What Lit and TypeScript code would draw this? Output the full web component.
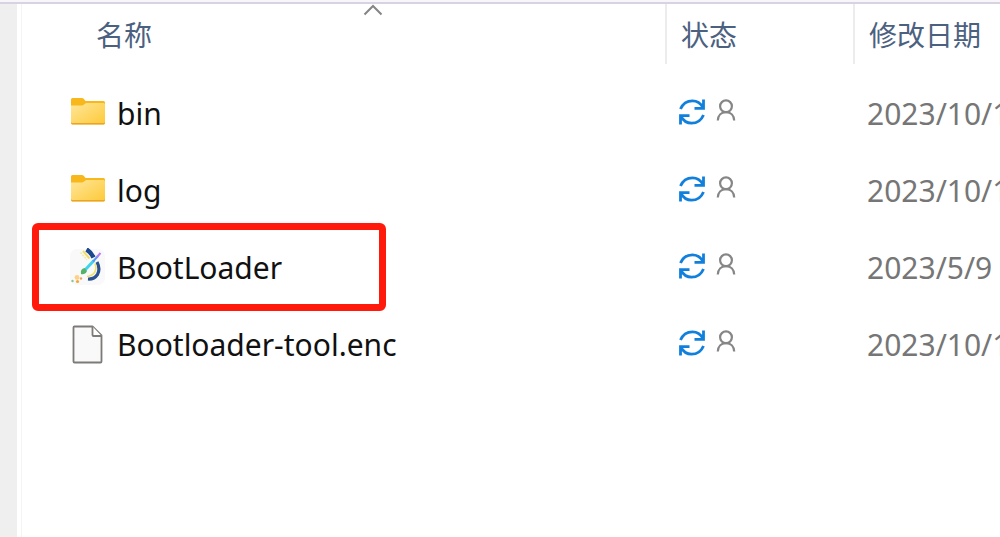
import { LitElement, html, css, svg, nothing } from "lit";
import { customElement, property } from "lit/decorators.js";

type Kind = "folder" | "app" | "file";

interface Entry {
  name: string;
  kind: Kind;
  modified: string;
  marked?: boolean;
}

const entries: Entry[] = [
  { name: "bin", kind: "folder", modified: "2023/10/1" },
  { name: "log", kind: "folder", modified: "2023/10/1" },
  { name: "BootLoader", kind: "app", modified: "2023/5/9", marked: true },
  { name: "Bootloader-tool.enc", kind: "file", modified: "2023/10/1" },
];

const folderShape = svg`
  <defs>
    <linearGradient id="front" x1="0" y1="0" x2="1" y2="1">
      <stop offset="0" stop-color="#ffe69a" />
      <stop offset="1" stop-color="#fdc937" />
    </linearGradient>
  </defs>
  <path d="M2 5.500q0-1.500 1.500-1.500h9.500q1 0 1.700.7l1.800 2.300h18q1.500 0 1.500 1.500v6H2z" fill="#f8b81c" />
  <path d="M2 11.500h11q1 0 1.800-.7l1.500-1.300q.6-.5 1.500-.5h16.700q1.500 0 1.500 1.500v18.500q0 1.500-1.500 1.500h-31q-1.500 0-1.500-1.500z" fill="url(#front)" />
  <path d="M2 28.500q0 2 1.500 2h31q1.500 0 1.500-2v-.5q0 1-1.500 1h-31q-1.500 0-1.500-1z" fill="#e9a52a" />`;

const appShape = svg`
  <rect x="1" y="1" width="35" height="36" rx="7" fill="#f9f9fa" />
  <path d="M17.500 1.500Q22 4 24.500 9.500" fill="none" stroke="#1b4690" stroke-width="4.500" />
  <path d="M14 3L20.500 10.500" stroke="#f5dc62" stroke-width="2" />
  <path d="M11.500 4.500L18 12" stroke="#f3e9a8" stroke-width="1.500" stroke-dasharray="2 1" />
  <path d="M28 14q3.500 7 .5 12.500q-3.500 5-9.500 4.500" fill="none" stroke="#2a5193" stroke-width="3.200" />
  <path d="M26 15.500q2 5-.5 9q-2.500 3.500-7.500 4" fill="none" stroke="#efe06a" stroke-width="1.600" />
  <path d="M15.500 22.500L25 12.500" stroke="#3fd3ee" stroke-width="3" />
  <path d="M24 13.500L29 8" stroke="#5b97f5" stroke-width="2" />
  <path d="M28 9L31.500 5" stroke="#b878f4" stroke-width="2" />
  <path d="M12 26q-1-5 3.500-6l2.500 3q-2 4-6 3z" fill="#55b267" />
  <circle cx="8" cy="29.500" r="2.400" fill="#ffd186" />
  <circle cx="8.500" cy="33.500" r="1.600" fill="#f5a63d" />
  <circle cx="12" cy="30.500" r="1.200" fill="#f0a05a" />
  <circle cx="3.500" cy="33" r="1.200" fill="#8cc68d" />`;

const fileShape = svg`
  <path d="M5.500 1.500h18l9 9v26q0 1-1 1h-26q-1 0-1-1v-34q0-1 1-1z" fill="#f9f9f9" stroke="#7d7b78" stroke-width="1.800" stroke-linejoin="round" />
  <path d="M23.500 1.500v8.500q0 1 1 1h8" fill="#fff" stroke="#7d7b78" stroke-width="1.800" stroke-linejoin="round" />`;

const shapes = { folder: folderShape, app: appShape, file: fileShape };

@customElement("entry-icon")
export class EntryIcon extends LitElement {
  static styles = css`
    :host { display: block; flex: none; }
    .icon { display: block; width: 38px; height: 39px; }
  `;

  @property() kind: Kind = "file";

  render() {
    return html`<svg class="icon" viewBox="0 0 38 39" aria-hidden="true">${shapes[this.kind]}</svg>`;
  }
}

@customElement("sync-status")
export class SyncStatus extends LitElement {
  static styles = css`
    :host { display: flex; align-items: flex-start; gap: 10px; padding-bottom: 4px; }
    .sync { width: 28px; height: 28px; }
    .person { width: 20px; height: 24px; }
    .stroke { fill: none; stroke-width: 2.800; }
    .blue { stroke: #117fdc; }
    .grey { stroke: #868686; stroke-width: 2.200; }
  `;

  render() {
    return html`
      <svg class="sync" viewBox="0 0 28 28" role="img" aria-label="正在同步">
        <path class="stroke blue" d="M2.500 11C5 5 10 2.800 14.500 2.800C19 2.800 22.500 5 25 9.500M25.500 1.500V10.300H16.500" />
        <path class="stroke blue" d="M25.500 17C23 23 18 25.200 13.500 25.200C9 25.200 5.500 23 3 18.500M2.500 26.500V17.700H11.500" />
      </svg>
      <svg class="person" viewBox="0 0 20 24" role="img" aria-label="共享">
        <circle class="stroke grey" cx="10" cy="8.300" r="5.900" />
        <path class="stroke grey" d="M1.800 22.500C2 17.500 5 14.200 10 14.200S18 17.500 18.200 22.500" />
      </svg>`;
  }
}

@customElement("app-root")
export class AppRoot extends LitElement {
  static styles = css`
    :host {
      display: flex;
      box-sizing: border-box;
      min-height: 100vh;
      overflow: hidden;
      background: #fff;
      color: #111;
      font-family: "Noto Sans", "Noto Sans CJK SC", sans-serif;
      font-size: 30px;
      line-height: 40px;
      border-top: 2px solid #f8f6fa;
    }
    .rail {
      flex: none;
      width: 17px;
      background: #efefef;
      border-top: 2px solid #d9d2e0;
    }
    .pane {
      flex: 1;
      min-width: 0;
      padding-left: 4px;
      border-top: 2px solid #d9d2e0;
    }
    .list {
      min-height: 100%;
      border-left: 1px solid #f4f4f4;
    }
    .files {
      width: 100%;
      table-layout: fixed;
      border-collapse: separate;
      border-spacing: 0;
    }
    .status-col { width: 188px; }
    .date-col { width: 147px; }
    .head {
      position: relative;
      height: 60px;
      padding: 2px 0 0 14px;
      box-sizing: border-box;
      text-align: left;
      font-size: 28px;
      font-weight: 400;
      color: #4b617f;
      border-left: 2px solid #ececec;
    }
    .head:first-child { padding-left: 74px; border-left: 0; }
    .sort {
      font: inherit;
      color: inherit;
      background: none;
      border: 0;
      padding: 0;
      white-space: nowrap;
      display: block;
    }
    .caret {
      position: absolute;
      top: 0;
      left: 53%;
      width: 20px;
      height: 12px;
    }
    .gap { height: 11px; padding: 0; }
    .cell {
      position: relative;
      height: 77px;
      box-sizing: border-box;
      padding: 0 0 0 13px;
      white-space: nowrap;
    }
    .cell:first-child { padding-left: 47px; }
    .entry { display: flex; align-items: center; gap: 10px; }
    .date { color: #767676; padding-left: 14px; }
    .mark {
      position: absolute;
      inset: -6px auto -5px 10px;
      width: 55%;
      box-sizing: border-box;
      border: 7px solid #ff1a0c;
      border-radius: 6px;
      pointer-events: none;
    }
  `;

  render() {
    return html`
      <div class="rail"></div>
      <main class="pane">
        <div class="list">
          <table class="files">
            <colgroup>
              <col />
              <col class="status-col" />
              <col class="date-col" />
            </colgroup>
            <thead>
              <tr>
                <th class="head" scope="col" aria-sort="ascending">
                  <button class="sort">名称</button>
                  <svg class="caret" viewBox="0 0 20 12" aria-hidden="true">
                    <path d="M1.500 10.500L10 2L18.500 10.500" fill="none" stroke="#858585" stroke-width="2" />
                  </svg>
                </th>
                <th class="head" scope="col"><button class="sort">状态</button></th>
                <th class="head" scope="col"><button class="sort">修改日期</button></th>
              </tr>
            </thead>
            <tbody>
              <tr><td class="gap" colspan="3"></td></tr>
              ${entries.map(
                (e) => html`
                  <tr>
                    <td class="cell">
                      <div class="entry"><entry-icon .kind=${e.kind}></entry-icon>${e.name}</div>
                      ${e.marked ? html`<div class="mark"></div>` : nothing}
                    </td>
                    <td class="cell"><sync-status></sync-status></td>
                    <td class="cell date">${e.modified}</td>
                  </tr>
                `
              )}
            </tbody>
          </table>
        </div>
      </main>
    `;
  }
}
